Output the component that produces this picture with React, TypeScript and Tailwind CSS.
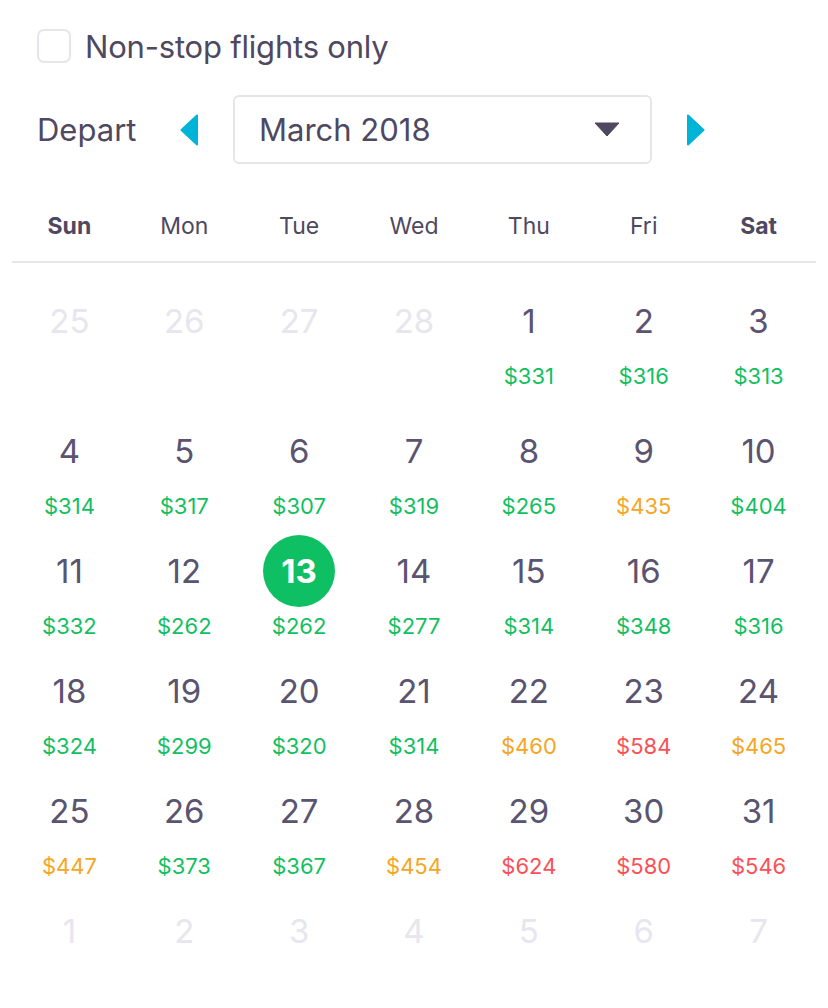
import React from "react";

type Cell = { d: number; p?: string; c?: "g" | "o" | "r"; muted?: boolean; sel?: boolean };

const G = "g", O = "o", R = "r";

const rows: Cell[][] = [
  [
    { d: 25, muted: true },
    { d: 26, muted: true },
    { d: 27, muted: true },
    { d: 28, muted: true },
    { d: 1, p: "$331", c: G },
    { d: 2, p: "$316", c: G },
    { d: 3, p: "$313", c: G },
  ],
  [
    { d: 4, p: "$314", c: G },
    { d: 5, p: "$317", c: G },
    { d: 6, p: "$307", c: G },
    { d: 7, p: "$319", c: G },
    { d: 8, p: "$265", c: G },
    { d: 9, p: "$435", c: O },
    { d: 10, p: "$404", c: G },
  ],
  [
    { d: 11, p: "$332", c: G },
    { d: 12, p: "$262", c: G },
    { d: 13, p: "$262", c: G, sel: true },
    { d: 14, p: "$277", c: G },
    { d: 15, p: "$314", c: G },
    { d: 16, p: "$348", c: G },
    { d: 17, p: "$316", c: G },
  ],
  [
    { d: 18, p: "$324", c: G },
    { d: 19, p: "$299", c: G },
    { d: 20, p: "$320", c: G },
    { d: 21, p: "$314", c: G },
    { d: 22, p: "$460", c: O },
    { d: 23, p: "$584", c: R },
    { d: 24, p: "$465", c: O },
  ],
  [
    { d: 25, p: "$447", c: O },
    { d: 26, p: "$373", c: G },
    { d: 27, p: "$367", c: G },
    { d: 28, p: "$454", c: O },
    { d: 29, p: "$624", c: R },
    { d: 30, p: "$580", c: R },
    { d: 31, p: "$546", c: R },
  ],
  [
    { d: 1, muted: true },
    { d: 2, muted: true },
    { d: 3, muted: true },
    { d: 4, muted: true },
    { d: 5, muted: true },
    { d: 6, muted: true },
    { d: 7, muted: true },
  ],
];

const priceColor = (c?: string) =>
  c === "o" ? "text-[#f5a623]" : c === "r" ? "text-[#fd4f57]" : "text-[#14bf62]";

const days = ["Sun", "Mon", "Tue", "Wed", "Thu", "Fri", "Sat"];

function DayCell({ cell }: { cell: Cell }) {
  return (
    <div className="flex flex-col items-center">
      <div className="h-[82px] flex items-center justify-center">
        {cell.sel ? (
          <div className="w-[72px] h-[72px] rounded-full bg-[#0fbf63] flex items-center justify-center text-white font-bold text-[33px] leading-none">
            {cell.d}
          </div>
        ) : (
          <span
            className={`text-[33px] leading-none ${cell.muted ? "text-[#e7e6ef]" : "text-[#5a5470]"}`}
          >
            {cell.d}
          </span>
        )}
      </div>
      {cell.p && (
        <div className={`h-[28px] leading-[28px] text-[22px] ${priceColor(cell.c)}`}>{cell.p}</div>
      )}
    </div>
  );
}

export default function App() {
  return (
    <div className="w-[828px] h-[1008px] bg-white overflow-hidden font-['Inter',sans-serif] text-[#4e4860]">
      <div className="flex items-center pl-[37px] pt-[29px]">
        <div className="w-[34px] h-[34px] rounded-[7px] border-2 border-[#e6e5ee] bg-white" />
        <span className="ml-[14px] text-[31px] leading-none tracking-[-0.2px]">Non-stop flights only</span>
      </div>

      <div className="flex items-center pl-[37px] mt-[32px] h-[69px]">
        <span className="w-[143px] text-[31px] leading-none">Depart</span>
        <svg width="18" height="32" viewBox="0 0 18 32" className="mt-[1px]">
          <path d="M17 1.5 L17 30.5 L1.5 16 Z" fill="#00b4d8" stroke="#00b4d8" strokeWidth="2" strokeLinejoin="round" />
        </svg>
        <div className="ml-[35px] w-[419px] h-[69px] rounded-[6px] border-2 border-[#e6e5ee] flex items-center pl-[24px] pr-[30px]">
          <span className="flex-1 text-[31px] leading-none">March 2018</span>
          <svg width="26" height="15" viewBox="0 0 26 15">
            <path d="M1 1 L25 1 L13 14 Z" fill="#4e4860" stroke="#4e4860" strokeWidth="1" strokeLinejoin="round" />
          </svg>
        </div>
        <svg width="18" height="32" viewBox="0 0 18 32" className="ml-[35px] mt-[1px]">
          <path d="M1 1.5 L1 30.5 L16.5 16 Z" fill="#00b4d8" stroke="#00b4d8" strokeWidth="2" strokeLinejoin="round" />
        </svg>
      </div>

      <div className="mx-[12px] mt-[23px]">
        <div className="grid grid-cols-7 h-[76px] items-center border-b-2 border-[#e6e5ee] pt-[4px]">
          {days.map((d, i) => (
            <div
              key={d}
              className={`text-center text-[23px] ${i === 0 || i === 6 ? "font-bold" : ""}`}
            >
              {d}
            </div>
          ))}
        </div>
        <div className="pt-[17px]">
          {rows.map((r, ri) => (
            <div key={ri} className={`grid grid-cols-7 h-[120px] ${ri === 0 ? "mb-[10px]" : ""}`}>
              {r.map((c, ci) => (
                <DayCell key={ci} cell={c} />
              ))}
            </div>
          ))}
        </div>
      </div>
    </div>
  );
}
